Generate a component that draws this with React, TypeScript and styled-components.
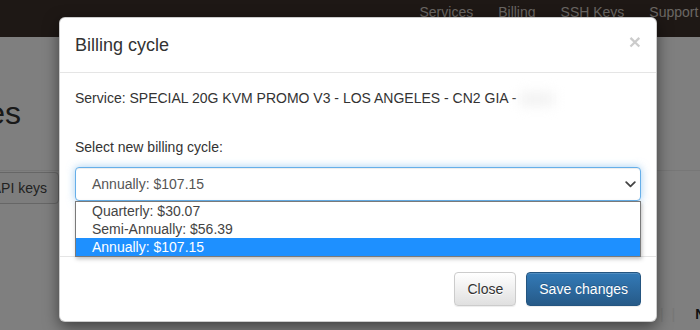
import React from "react";
import styled, { createGlobalStyle } from "styled-components";

const GlobalStyle = createGlobalStyle`
  html, body { margin: 0; padding: 0; }
  body {
    font-family: "Liberation Sans", Arial, Helvetica, sans-serif;
    font-size: 14px;
    line-height: 20px;
    color: #333;
    background: #fff;
    overflow: hidden;
  }
  * { box-sizing: border-box; }
`;

const Page = styled.div`
  position: relative;
  width: 700px;
  height: 330px;
  overflow: hidden;
  display: flex;
  flex-direction: column;
  background: #fff;
`;

const Navbar = styled.nav`
  height: 37px;
  flex-shrink: 0;
  background: #3c302a;
  display: flex;
  padding-left: 407px;
  overflow: hidden;
`;

const NavLink = styled.a`
  color: #d4cdc6;
  font-size: 14px;
  line-height: 20px;
  padding: 2px 12.5px 0;
  white-space: nowrap;
  text-decoration: none;
`;

const Content = styled.div`
  flex: 1;
  display: flex;
  flex-direction: column;
`;

const Clip = styled.div<{ $w: number }>`
  width: ${(p) => p.$w}px;
  overflow: hidden;
  display: flex;
  justify-content: flex-end;
`;

const HeadingRow = styled.div`
  margin-top: 56px;
`;

const PageTitle = styled.h1`
  margin: 0;
  font-size: 32px;
  line-height: 40px;
  font-weight: 500;
  color: #333;
  white-space: nowrap;
`;

const Divider = styled.div`
  margin-top: 37px;
  height: 1px;
  background: #eee;
`;

const ToolbarRow = styled.div`
  margin-top: 1px;
`;

const PageButton = styled.span`
  display: inline-block;
  white-space: nowrap;
  padding: 5px 11px 5px 12px;
  border: 1px solid #ccc;
  border-radius: 4px;
  background: #fafafa;
  color: #444;
  font-size: 14px;
  line-height: 20px;
`;

const BottomRow = styled.div`
  margin-top: auto;
  height: 26px;
  display: flex;
  align-items: flex-start;
  padding-left: 660px;
  gap: 18px;
  white-space: nowrap;
`;

const Pipes = styled.span`
  color: #eee;
  font-size: 14px;
  letter-spacing: 2px;
`;

const BoldCell = styled.span`
  color: #222;
  font-weight: 700;
  font-size: 14px;
`;

const Backdrop = styled.div`
  position: absolute;
  inset: 0;
  background: rgba(0, 0, 0, 0.5);
`;

const Dialog = styled.div`
  position: absolute;
  left: 59px;
  top: 17px;
  width: 598px;
  background: #fff;
  border: 1px solid rgba(0, 0, 0, 0.2);
  border-radius: 6px;
  box-shadow: 0 5px 15px rgba(0, 0, 0, 0.5);
`;

const Header = styled.div`
  padding: 15px 15px 14px;
  border-bottom: 1px solid #e5e5e5;
  display: flex;
  justify-content: space-between;
  align-items: flex-start;
`;

const Title = styled.h4`
  margin: 0;
  font-size: 18px;
  line-height: 25px;
  font-weight: 500;
  color: #333;
`;

const CloseX = styled.button`
  margin-top: -2px;
  padding: 0;
  border: 0;
  background: transparent;
  font-family: "Liberation Sans", Arial, sans-serif;
  font-size: 21px;
  font-weight: 700;
  line-height: 21px;
  color: #000;
  opacity: 0.2;
  text-shadow: 0 1px 0 #fff;
  cursor: pointer;
`;

const Body = styled.div`
  padding: 15px 15px 15px;
`;

const ServiceText = styled.p`
  margin: 0;
  color: #333;
  white-space: nowrap;
`;

const Smudge = styled.span`
  display: inline-block;
  width: 34px;
  height: 14px;
  margin-left: 4px;
  vertical-align: middle;
  background: #f2f2f2;
  filter: blur(6px);
`;

const FieldLabel = styled.label`
  display: block;
  margin: 29px 0 10px;
  font-weight: 400;
  color: #333;
`;

const SelectWrap = styled.div`
  position: relative;
  margin-bottom: 40px;
`;

const SelectBox = styled.div`
  height: 34px;
  display: flex;
  align-items: center;
  justify-content: space-between;
  padding: 0 4px 0 16px;
  border: 1px solid #66afe9;
  border-radius: 4px;
  background: #fff;
  color: #555;
  box-shadow: inset 0 1px 1px rgba(0, 0, 0, 0.075), 0 0 8px rgba(102, 175, 233, 0.6);
`;

const Dropdown = styled.ul`
  position: absolute;
  top: 100%;
  left: 0;
  right: 0;
  margin: 0;
  padding: 0;
  list-style: none;
  background: #fff;
  border: 1px solid #7a7a7a;
  box-shadow: 1px 2px 4px rgba(0, 0, 0, 0.25);
  z-index: 2;
`;

const Option = styled.li<{ $active?: boolean }>`
  height: 18px;
  line-height: 18px;
  padding-left: 16px;
  font-size: 14px;
  color: ${(p) => (p.$active ? "#fff" : "#444")};
  background: ${(p) => (p.$active ? "#1e90ff" : "#fff")};
`;

const Footer = styled.div`
  padding: 15px;
  border-top: 1px solid #e5e5e5;
  display: flex;
  justify-content: flex-end;
  gap: 10px;
`;

const Btn = styled.button<{ $primary?: boolean }>`
  height: 34px;
  padding: 6px 12px;
  font-family: "Liberation Sans", Arial, sans-serif;
  font-size: 14px;
  line-height: 20px;
  border-radius: 4px;
  cursor: pointer;
  border: 1px solid ${(p) => (p.$primary ? "#245580" : "#ccc")};
  color: ${(p) => (p.$primary ? "#fff" : "#333")};
  text-shadow: ${(p) => (p.$primary ? "0 -1px 0 rgba(0,0,0,.2)" : "0 1px 0 #fff")};
  background: ${(p) =>
    p.$primary
      ? "linear-gradient(to bottom, #337ab7 0%, #265a88 100%)"
      : "linear-gradient(to bottom, #fff 0%, #e0e0e0 100%)"};
  box-shadow: inset 0 1px 0 rgba(255, 255, 255, 0.15), 0 1px 1px rgba(0, 0, 0, 0.075);
`;

const Chevron = () => (
  <svg width="11" height="7" viewBox="0 0 11 7" aria-hidden="true">
    <path d="M1.2 1.2 L5.5 5.4 L9.8 1.2" fill="none" stroke="#444" strokeWidth="1.8" strokeLinecap="round" strokeLinejoin="round" />
  </svg>
);

export default function App() {
  return (
    <>
      <GlobalStyle />
      <Page>
        <Navbar>
          <NavLink>Services</NavLink>
          <NavLink>Billing</NavLink>
          <NavLink>SSH Keys</NavLink>
          <NavLink>Support</NavLink>
        </Navbar>
        <Content>
          <HeadingRow>
            <Clip $w={21}>
              <PageTitle>Services</PageTitle>
            </Clip>
          </HeadingRow>
          <Divider />
          <ToolbarRow>
            <Clip $w={59}>
              <PageButton>API keys</PageButton>
            </Clip>
          </ToolbarRow>
          <BottomRow>
            <Pipes>| |</Pipes>
            <BoldCell>Name</BoldCell>
          </BottomRow>
        </Content>

        <Backdrop />
        <Dialog role="dialog">
          <Header>
            <Title>Billing cycle</Title>
            <CloseX aria-label="Close">×</CloseX>
          </Header>
          <Body>
            <ServiceText>
              Service: SPECIAL 20G KVM PROMO V3 - LOS ANGELES - CN2 GIA -<Smudge />
            </ServiceText>
            <FieldLabel>Select new billing cycle:</FieldLabel>
            <SelectWrap>
              <SelectBox role="combobox">
                <span>Annually: $107.15</span>
                <Chevron />
              </SelectBox>
              <Dropdown role="listbox">
                <Option>Quarterly: $30.07</Option>
                <Option>Semi-Annually: $56.39</Option>
                <Option $active>Annually: $107.15</Option>
              </Dropdown>
            </SelectWrap>
          </Body>
          <Footer>
            <Btn>Close</Btn>
            <Btn $primary>Save changes</Btn>
          </Footer>
        </Dialog>
      </Page>
    </>
  );
}
